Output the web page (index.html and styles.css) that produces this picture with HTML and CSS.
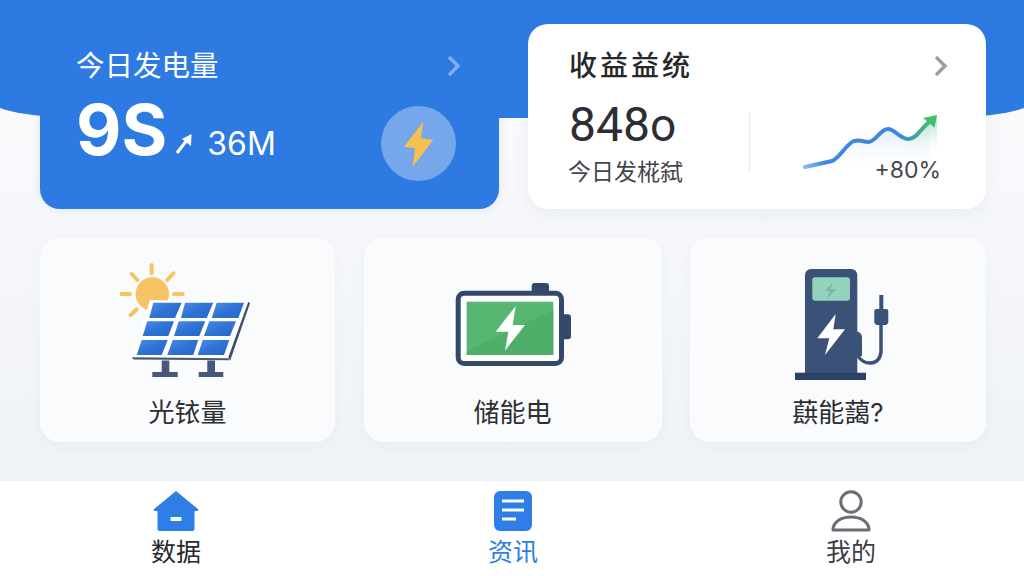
FILE: index.html
```html
<!DOCTYPE html>
<html lang="zh">
<head>
    <meta charset="UTF-8">
    <meta name="viewport" content="width=device-width, initial-scale=1.0">
    <title>数据</title>
    <link rel="stylesheet" href="styles.css">
</head>
<body>
    <div class="hero-bg"></div>

    <main class="content">
        <!-- 顶部两张卡片 -->
        <section class="summary">
            <div class="card card-blue">
                <div class="card-head">
                    <h2 class="card-title">今日发电量</h2>
                    <svg class="chevron" width="16" height="24" viewBox="0 0 16 24"><path d="M3 3l9 9-9 9" fill="none" stroke="#7fb0f0" stroke-width="3.4"/></svg>
                </div>
                <div class="card-body">
                    <div class="power">
                        <span class="power-main">9S</span>
                        <svg class="power-arrow" width="18" height="22" viewBox="0 0 18 22"><path d="M2 20L12 7" stroke="#fff" stroke-width="3"/><path d="M16.500 1L16 13 7 6z" fill="#fff"/></svg>
                        <span class="power-sub">36M</span>
                    </div>
                    <div class="bolt-circle">
                        <svg width="32" height="46" viewBox="0 0 32 46"><path d="M20.300.7L1 25.700l11 1.600-2.300 18.400L30.300 19l-12.600-1.700z" fill="#f8c04f"/></svg>
                    </div>
                </div>
            </div>

            <div class="card card-white">
                <div class="card-head">
                    <h2 class="card-title card-title-dark">收益益统</h2>
                    <svg class="chevron" width="16" height="24" viewBox="0 0 16 24"><path d="M3 3l9 9-9 9" fill="none" stroke="#9a9ea6" stroke-width="3.4"/></svg>
                </div>
                <div class="card-body income">
                    <div class="income-left">
                        <div class="income-num">848<span class="income-tail">o</span></div>
                        <div class="income-label">今日发椛弑</div>
                    </div>
                    <div class="income-chart">
                        <svg width="146" height="70" viewBox="803 110 146 70">
                            <defs>
                                <linearGradient id="lineGrad" gradientUnits="userSpaceOnUse" x1="805" x2="937" y1="0" y2="0">
                                    <stop offset="0" stop-color="#8ab8f5"/>
                                    <stop offset="0.15" stop-color="#3f86e6"/>
                                    <stop offset="0.72" stop-color="#3f86de"/>
                                    <stop offset="0.95" stop-color="#45bd6f"/>
                                </linearGradient>
                                <linearGradient id="blueFade" x1="0" x2="0" y1="0" y2="1">
                                    <stop offset="0" stop-color="#d8e5f8"/>
                                    <stop offset="1" stop-color="#fff" stop-opacity="0"/>
                                </linearGradient>
                                <linearGradient id="greenFade" x1="0" x2="0" y1="0" y2="1">
                                    <stop offset="0" stop-color="#a9e3bf"/>
                                    <stop offset="1" stop-color="#fff" stop-opacity="0"/>
                                </linearGradient>
                            </defs>
                            <path d="M805 167L832 161C840 158 846 144 854 141C860 139 864 142 868 142C876 142 880 129 888 129C895 129 900 139 908 139C916 139 920 130 930 122V172H805z" fill="url(#blueFade)"/>
                            <path d="M908 139C916 139 924 125 937 116V158H908z" fill="url(#greenFade)"/>
                            <path d="M805 167L832 161C840 158 846 144 854 141C860 139 864 142 868 142C876 142 880 129 888 129C895 129 900 139 908 139C916 139 920 130 929 122" fill="none" stroke="url(#lineGrad)" stroke-width="4" stroke-linecap="round"/>
                            <path d="M937 115L934.500 127.500 923 118z" fill="#45bd6f"/>
                        </svg>
                        <span class="income-pct">+80%</span>
                    </div>
                </div>
            </div>
        </section>

        <!-- 三个设备入口 -->
        <section class="devices">
            <div class="tile tile-a">
                <svg class="icon-solar" width="132" height="116" viewBox="120 263 132 116">
                    <defs>
                        <linearGradient id="cellGrad" x1="0" x2="1" y1="0" y2="1">
                            <stop offset="0" stop-color="#4a8ce6"/>
                            <stop offset="0.5" stop-color="#2f72d6"/>
                            <stop offset="1" stop-color="#2766c6"/>
                        </linearGradient>
                    </defs>
                    <path d="M151.700 265v8M131.700 274l5.600 6M173.300 273.300l-6 6.700M120.700 294h9.300M174 294h8.700M130.700 315l6-5.700" stroke="#f8c364" stroke-width="4" stroke-linecap="round"/>
                    <circle cx="152.300" cy="294" r="16.700" fill="#f8c364"/>
                    <path d="M150 300L248.300 301.700 228.300 358.300 131.700 357.300z" fill="#fff"/>
                    <path d="M248.300 301.700l1.700 1.500-19.700 57-2-2.900z" fill="#3d4f6e"/>
                    <path d="M131.700 357.300l96.600 1 2 1.900-96.600-.7z" fill="#46597a"/>
                    <g fill="url(#cellGrad)">
                        <path d="M153.300 302.700h28.400l-6.700 15.300h-25.700z"/>
                        <path d="M185 302.700h28.300L206.700 318H181z"/>
                        <path d="M216.700 302.700H244L238.300 318h-26.600z"/>
                        <path d="M147.300 321.300H174L168.300 336h-25.600z"/>
                        <path d="M178.700 321.300h26.600L199.300 336H174z"/>
                        <path d="M209.300 321.300H236L230 336h-26z"/>
                        <path d="M141.700 340h26l-6 15h-25z"/>
                        <path d="M172.700 340h25.600l-5 15h-26z"/>
                        <path d="M202.700 340h26.600L224 355h-26.300z"/>
                    </g>
                    <path d="M161.700 360.500h7.600V372h8.400v5h-25.400v-5h9.400zM207.300 360.500h7.700V372h8.300v5h-24.600v-5h8.600z" fill="#46597a"/>
                </svg>
                <span class="tile-label">光铱量</span>
            </div>

            <div class="tile tile-b">
                <svg width="116" height="84" viewBox="455 283 116 84">
                    <path d="M531.700 286a3 3 0 0 1 3-3h11.300a3 3 0 0 1 3 3v6h-17.300z" fill="#34496a"/>
                    <path d="M562 314.300h6a3 3 0 0 1 3 3v19a3 3 0 0 1-3 3h-6z" fill="#34496a"/>
                    <rect x="458.200" y="293.200" width="103.300" height="70.300" rx="6" fill="#fff" stroke="#34496a" stroke-width="5"/>
                    <rect x="466.700" y="301.700" width="86.600" height="53.300" fill="#58b673"/>
                    <path d="M466.700 355v-4L553.300 310v45z" fill="#4fae69"/>
                    <path d="M515.700 306L495.700 331.700H508.300L505 350.700 525 325H512.700z" fill="#fff"/>
                </svg>
                <span class="tile-label">储能电</span>
            </div>

            <div class="tile tile-c">
                <svg class="icon-pump" width="94" height="113" viewBox="795 268 94 113">
                    <path d="M805 275a6 6 0 0 1 6-6h40.300a6 6 0 0 1 6 6v98H805z" fill="#3b5278"/>
                    <rect x="812.300" y="277.300" width="37.700" height="23.400" rx="3" fill="#93d3bb"/>
                    <path d="M833 282L825 291h5l-3 8 9-10h-5z" fill="#7fb8a8"/>
                    <path d="M835.700 314L817.300 338.300H829.300L825 355 845 329.300H833.300z" fill="#fff"/>
                    <path d="M857 331.700h1.500q3.500 2 3.500 6v18l-5 2z" fill="#3b5278"/>
                    <rect x="795" y="372.700" width="71" height="7.300" fill="#2c4262"/>
                    <path d="M858 356c5 9 21 11 23-4V324" fill="none" stroke="#3b5278" stroke-width="3.500"/>
                    <path d="M874.300 311a2 2 0 0 1 2-2h3v-14h4v14h3a2 2 0 0 1 2 2v12l-2 2h-10l-2-2z" fill="#3b5278"/>
                </svg>
                <span class="tile-label">蕻能藹?</span>
            </div>
        </section>
    </main>

    <!-- 底部导航 -->
    <nav class="tabbar">
        <a class="tab">
            <svg width="46" height="42" viewBox="0 0 46 42"><path d="M23 1L.500 19.500l1 1.500h3v18a2 2 0 0 0 2 2h33a2 2 0 0 0 2-2V21h3l1-1.500z" fill="#2f7de6"/><rect x="17.500" y="27" width="11" height="4" rx="1" fill="#fff"/></svg>
            <span>数据</span>
        </a>
        <a class="tab tab-active">
            <svg width="38" height="42" viewBox="0 0 38 42"><rect y="1" width="38" height="40" rx="6" fill="#2f7de6"/><path d="M8 11h22M8 20h22M8 29h14" stroke="#fff" stroke-width="3"/></svg>
            <span>资讯</span>
        </a>
        <a class="tab tab-me">
            <svg width="40" height="42" viewBox="0 0 40 42"><circle cx="20" cy="12" r="10.200" fill="none" stroke="#686d76" stroke-width="3"/><path d="M2 40c0-8 8-13 18-13s18 5 18 13z" fill="none" stroke="#686d76" stroke-width="3" stroke-linejoin="round"/></svg>
            <span>我的</span>
        </a>
    </nav>
</body>
</html>
```

FILE: styles.css
```css
* {
    box-sizing: border-box;
    margin: 0;
    padding: 0;
    font-family: Inter, 'Noto Sans CJK SC', sans-serif;
}

body {
    width: 1024px;
    height: 576px;
    overflow: hidden;
    position: relative;
    display: flex;
    flex-direction: column;
    background: linear-gradient(#f9fafc 100px, #eff2f7 480px);
}

.hero-bg {
    position: absolute;
    top: 0;
    left: -20px;
    width: 1064px;
    height: 118px;
    background: #2d7be2;
    border-radius: 0 0 100px 100px / 0 0 25px 25px;
}

.content {
    position: relative;
    flex: 1;
    padding: 24px 38px 0 40px;
}

.summary {
    display: grid;
    grid-template-columns: 459px 458px;
    gap: 29px;
}

.card {
    height: 185px;
    border-radius: 20px;
    padding: 21px 37px 28px 36px;
    display: flex;
    flex-direction: column;
}

.card-blue {
    background: #2d7be2;
    box-shadow: 0 0 10px rgba(30, 90, 180, 0.12);
}

.card-white {
    background: #fff;
    padding-left: 41px;
    box-shadow: 0 6px 18px rgba(60, 90, 140, 0.08);
}

.card-head {
    display: flex;
    justify-content: space-between;
    align-items: center;
}

.card-title {
    font-size: 28.500px;
    font-weight: 400;
    line-height: 42px;
    color: #fff;
}

.card-title-dark {
    font-size: 28px;
    font-weight: 500;
    letter-spacing: 3px;
    color: #26282c;
}

.card-body {
    flex: 1;
    display: flex;
    justify-content: space-between;
    align-items: flex-end;
}

.power {
    display: flex;
    align-items: baseline;
    color: #fff;
    margin-bottom: 16px;
}

.power-main {
    font-size: 70px;
    font-weight: 700;
    line-height: 70px;
}

.power-arrow {
    margin: 0 14px 0 8px;
}

.power-sub {
    font-size: 32px;
}

.bolt-circle {
    width: 75px;
    height: 75px;
    margin-right: 6px;
    border-radius: 50%;
    background: #76a7ea;
    display: flex;
    align-items: center;
    justify-content: center;
}

.income {
    align-items: flex-start;
    margin-top: 12px;
}

.income-num {
    font-family: Roboto, sans-serif;
    font-size: 48px;
    font-weight: 400;
    line-height: 52px;
    color: #2c2e33;
}

.income-tail {
    font-family: Roboto, sans-serif;
    font-size: 46px;
}

.income-label {
    font-size: 23px;
    line-height: 34px;
    margin-top: 4px;
    margin-left: -1px;
    color: #44474d;
}

.income-chart {
    position: relative;
    width: 200px;
    height: 61px;
    margin-top: 13px;
    border-left: 1px solid #e9ebee;
    display: flex;
    justify-content: flex-end;
}

.income-chart svg {
    flex-shrink: 0;
    margin-top: -2px;
}

.income-pct {
    position: absolute;
    right: 8px;
    top: 44px;
    font-size: 23px;
    line-height: 28px;
    color: #44474d;
}

.devices {
    display: grid;
    grid-template-columns: 295px 298px 296px;
    gap: 28.500px;
    margin-top: 28px;
}

.tile {
    height: 205px;
    border-radius: 20px;
    background: #fafbfd;
    box-shadow: 0 4px 14px rgba(60, 90, 140, 0.04);
    display: flex;
    flex-direction: column;
    align-items: center;
}

.tile-label {
    font-size: 26px;
    line-height: 38px;
    color: #2c2e33;
}

.tile-a {
    padding-top: 26px;
}

.icon-solar {
    margin-right: 3px;
}

.tile-a .tile-label {
    margin-top: 15px;
}

.tile-b {
    padding-top: 46px;
}

.tile-b .tile-label {
    margin-top: 27px;
}

.tile-c {
    padding-top: 31px;
}

.icon-pump {
    margin-left: 8px;
}

.tile-c .tile-label {
    margin-top: 13px;
}

.tabbar {
    position: relative;
    height: 96px;
    background: #fff;
    display: grid;
    grid-template-columns: 352px 322px 350px;
    border-top: 1px solid #eceff4;
    padding-top: 9px;
}

.tab {
    display: flex;
    flex-direction: column;
    align-items: center;
    font-size: 25px;
    line-height: 36px;
    color: #26282c;
}

.tab span {
    margin-top: 2px;
}

.tab-active {
    color: #2f7de6;
}

.tab-me {
    padding-left: 4px;
    color: #3b3e44;
}
```
